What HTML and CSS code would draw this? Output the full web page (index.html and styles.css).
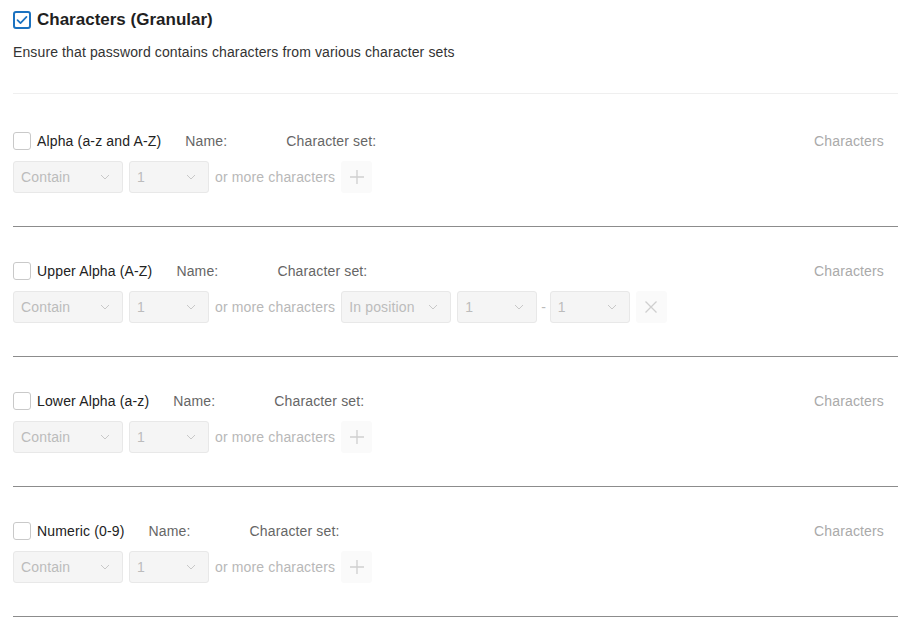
FILE: index.html
```html
<!DOCTYPE html>
<html>
<head>
<meta charset="utf-8">
<link rel="stylesheet" href="styles.css">
</head>
<body>
<div class="page">
  <div class="header">
    <div class="title-row">
      <span class="cb cb-on">
        <svg width="12" height="10" viewBox="0 0 12 10"><path d="M1.5 5.2 L4.5 8.2 L10.5 1.8" fill="none" stroke="#1b72c0" stroke-width="1.7" stroke-linecap="round" stroke-linejoin="round"/></svg>
      </span>
      <h1 class="title">Characters (Granular)</h1>
    </div>
    <p class="desc">Ensure that password contains characters from various character sets</p>
  </div>

  <div class="section first">
    <div class="row-top">
      <span class="cb"></span>
      <span class="label">Alpha (a-z and A-Z)</span>
      <span class="name">Name:</span>
      <span class="charset">Character set:</span>
      <span class="chars">Characters</span>
    </div>
    <div class="row-bottom">
      <div class="sel sel-wide"><span>Contain</span><svg class="chev" width="10" height="6" viewBox="0 0 10 6"><path d="M1 1 L5 5 L9 1" fill="none" stroke="#c8c8c8" stroke-width="1"/></svg></div>
      <div class="sel sel-num"><span>1</span><svg class="chev" width="10" height="6" viewBox="0 0 10 6"><path d="M1 1 L5 5 L9 1" fill="none" stroke="#c8c8c8" stroke-width="1"/></svg></div>
      <span class="more">or more characters</span>
      <div class="btn"><svg width="16" height="16" viewBox="0 0 16 16"><path d="M8 1 V15 M1 8 H15" stroke="#cfcfcf" stroke-width="1.3"/></svg></div>
    </div>
  </div>

  <div class="section">
    <div class="row-top">
      <span class="cb"></span>
      <span class="label">Upper Alpha (A-Z)</span>
      <span class="name">Name:</span>
      <span class="charset">Character set:</span>
      <span class="chars">Characters</span>
    </div>
    <div class="row-bottom">
      <div class="sel sel-wide"><span>Contain</span><svg class="chev" width="10" height="6" viewBox="0 0 10 6"><path d="M1 1 L5 5 L9 1" fill="none" stroke="#c8c8c8" stroke-width="1"/></svg></div>
      <div class="sel sel-num"><span>1</span><svg class="chev" width="10" height="6" viewBox="0 0 10 6"><path d="M1 1 L5 5 L9 1" fill="none" stroke="#c8c8c8" stroke-width="1"/></svg></div>
      <span class="more">or more characters</span>
      <div class="sel sel-wide"><span>In position</span><svg class="chev" width="10" height="6" viewBox="0 0 10 6"><path d="M1 1 L5 5 L9 1" fill="none" stroke="#c8c8c8" stroke-width="1"/></svg></div>
      <div class="sel sel-num"><span>1</span><svg class="chev" width="10" height="6" viewBox="0 0 10 6"><path d="M1 1 L5 5 L9 1" fill="none" stroke="#c8c8c8" stroke-width="1"/></svg></div>
      <span class="dash">-</span>
      <div class="sel sel-num"><span>1</span><svg class="chev" width="10" height="6" viewBox="0 0 10 6"><path d="M1 1 L5 5 L9 1" fill="none" stroke="#c8c8c8" stroke-width="1"/></svg></div>
      <div class="btn"><svg width="16" height="16" viewBox="0 0 16 16"><path d="M2.5 2.5 L13.5 13.5 M13.5 2.5 L2.5 13.5" stroke="#cfcfcf" stroke-width="1.3"/></svg></div>
    </div>
  </div>

  <div class="section">
    <div class="row-top">
      <span class="cb"></span>
      <span class="label">Lower Alpha (a-z)</span>
      <span class="name">Name:</span>
      <span class="charset">Character set:</span>
      <span class="chars">Characters</span>
    </div>
    <div class="row-bottom">
      <div class="sel sel-wide"><span>Contain</span><svg class="chev" width="10" height="6" viewBox="0 0 10 6"><path d="M1 1 L5 5 L9 1" fill="none" stroke="#c8c8c8" stroke-width="1"/></svg></div>
      <div class="sel sel-num"><span>1</span><svg class="chev" width="10" height="6" viewBox="0 0 10 6"><path d="M1 1 L5 5 L9 1" fill="none" stroke="#c8c8c8" stroke-width="1"/></svg></div>
      <span class="more">or more characters</span>
      <div class="btn"><svg width="16" height="16" viewBox="0 0 16 16"><path d="M8 1 V15 M1 8 H15" stroke="#cfcfcf" stroke-width="1.3"/></svg></div>
    </div>
  </div>

  <div class="section">
    <div class="row-top">
      <span class="cb"></span>
      <span class="label">Numeric (0-9)</span>
      <span class="name">Name:</span>
      <span class="charset">Character set:</span>
      <span class="chars">Characters</span>
    </div>
    <div class="row-bottom">
      <div class="sel sel-wide"><span>Contain</span><svg class="chev" width="10" height="6" viewBox="0 0 10 6"><path d="M1 1 L5 5 L9 1" fill="none" stroke="#c8c8c8" stroke-width="1"/></svg></div>
      <div class="sel sel-num"><span>1</span><svg class="chev" width="10" height="6" viewBox="0 0 10 6"><path d="M1 1 L5 5 L9 1" fill="none" stroke="#c8c8c8" stroke-width="1"/></svg></div>
      <span class="more">or more characters</span>
      <div class="btn"><svg width="16" height="16" viewBox="0 0 16 16"><path d="M8 1 V15 M1 8 H15" stroke="#cfcfcf" stroke-width="1.3"/></svg></div>
    </div>
  </div>
</div>
</body>
</html>
```
FILE: styles.css
```css
* { box-sizing: border-box; }
html, body { margin: 0; padding: 0; background: #fff; }
body {
  font-family: "Liberation Sans", Arial, sans-serif;
  color: #222;
}
.page {
  width: 898px;
  padding-left: 13px;
}
.header {
  border-bottom: 1px solid #efefef;
  padding-top: 11px;
  height: 94px;
}
.title-row {
  display: flex;
  align-items: center;
  gap: 6px;
}
.title {
  margin: 0;
  font-size: 17px;
  font-weight: bold;
  color: #1f1f1f;
  line-height: 18px;
}
.desc {
  margin: 15px 0 0;
  font-size: 14px;
  letter-spacing: 0.12px;
  color: #333;
  line-height: 16px;
}
.cb {
  display: inline-flex;
  align-items: center;
  justify-content: center;
  width: 18px;
  height: 18px;
  border: 1px solid #c9c9c9;
  border-radius: 3px;
  background: #fff;
  flex: none;
}
.cb-on {
  border: 2px solid #1b72c0;
}
.section {
  border-bottom: 1px solid #8c8c8c;
  padding-top: 35px;
  padding-bottom: 33px;
}
.section.first {
  padding-top: 38px;
}
.row-top {
  display: flex;
  align-items: center;
  height: 18px;
  font-size: 14px;
  letter-spacing: 0.15px;
}
.label {
  margin-left: 6px;
  color: #222;
}
.name {
  margin-left: 24px;
  color: #666;
  width: 101px;
}
.charset {
  color: #666;
}
.chars {
  margin-left: auto;
  margin-right: 14px;
  color: #aaa;
  font-size: 14px;
}
.row-bottom {
  display: flex;
  align-items: center;
  gap: 6px;
  margin-top: 11px;
  height: 32px;
}
.sel {
  display: flex;
  align-items: center;
  justify-content: space-between;
  height: 32px;
  background: #f5f5f5;
  border: 1px solid #e8e8e8;
  border-radius: 3px;
  padding: 0 12px 0 7px;
  color: #bcbcbc;
  font-size: 14px;
  letter-spacing: 0.15px;
}
.sel-wide { width: 110px; }
.sel-num { width: 80px; }
.chev { flex: none; }
.more {
  color: #b8b8b8;
  font-size: 14px;
  letter-spacing: 0.15px;
}
.dash {
  color: #bbb;
  font-size: 14px;
  margin: 0 -2px;
}
.btn {
  width: 31px;
  height: 32px;
  display: flex;
  align-items: center;
  justify-content: center;
  background: #fafafa;
  border-radius: 3px;
}
```
